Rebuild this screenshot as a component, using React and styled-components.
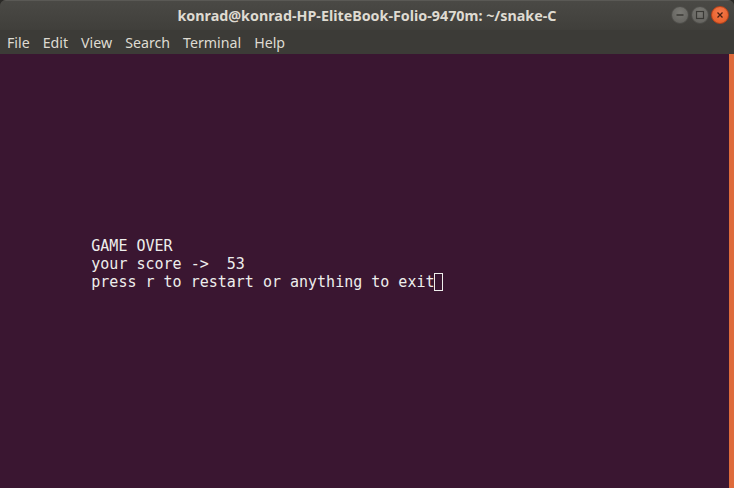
import styled, { createGlobalStyle } from "styled-components";

const GlobalStyle = createGlobalStyle`
  html, body {
    margin: 0;
    padding: 0;
    background: #2b2a27;
  }
  #root {
    width: 734px;
    height: 488px;
  }
`;

const Window = styled.div`
  width: 734px;
  height: 488px;
  display: flex;
  flex-direction: column;
  border-radius: 6px 6px 0 0;
  overflow: hidden;
  background: #3c3b37;
`;

const TitleBar = styled.div`
  height: 30px;
  position: relative;
  display: flex;
  align-items: center;
  justify-content: center;
  background: linear-gradient(#4a4945, #403f3b);
  border-top: 1px solid #5a5955;
  box-sizing: border-box;
`;

const Title = styled.div`
  font-family: "Noto Sans", "DejaVu Sans", sans-serif;
  font-weight: bold;
  font-size: 14.3px;
  color: #dfdbd2;
`;

const Controls = styled.div`
  position: absolute;
  right: 5px;
  top: 5px;
  display: flex;
  gap: 2px;
`;

const Circle = styled.div`
  width: 18px;
  height: 18px;
  border-radius: 50%;
  display: flex;
  align-items: center;
  justify-content: center;
  box-sizing: border-box;
  border: 1px solid ${(p) => (p.close ? "#b8431b" : "#4e4d49")};
  background: ${(p) =>
    p.close
      ? "radial-gradient(circle at 50% 35%, #f47a4d, #e35a22)"
      : "radial-gradient(circle at 50% 35%, #7a7974, #5f5e5a)"};
`;

const MenuBar = styled.div`
  height: 24px;
  display: flex;
  align-items: center;
  gap: 13px;
  padding-left: 7px;
  background: #3c3b37;
`;

const MenuItem = styled.span`
  font-family: "Noto Sans", "DejaVu Sans", sans-serif;
  font-size: 14.2px;
  color: #dfdbd2;
`;

const TerminalArea = styled.div`
  flex: 1;
  display: flex;
`;

const Screen = styled.div`
  flex: 1;
  background: #3a1631;
  padding-top: 3px;
  padding-left: 1px;
`;

const Line = styled.div`
  height: 18px;
  line-height: 18px;
  font-family: "DejaVu Sans Mono", "Liberation Mono", monospace;
  font-size: 15px;
  color: #eeeeec;
  white-space: pre;
  display: flex;
  align-items: center;
`;

const Cursor = styled.span`
  display: inline-block;
  width: 9px;
  height: 18px;
  box-sizing: border-box;
  border: 1px solid #eeeeec;
`;

const Scrollbar = styled.div`
  width: 5px;
  background: #de6b3b;
`;

const menus = ["File", "Edit", "View", "Search", "Terminal", "Help"];

const lines = [
  "", "", "", "", "", "", "", "", "", "",
  "          GAME OVER",
  "          your score ->  53",
];

export default function App() {
  return (
    <>
      <GlobalStyle />
      <Window>
        <TitleBar>
          <Title>konrad@konrad-HP-EliteBook-Folio-9470m: ~/snake-C</Title>
          <Controls>
            <Circle>
              <svg width="10" height="10" viewBox="0 0 10 10">
                <line x1="1.5" y1="5" x2="8.5" y2="5" stroke="#3a3935" strokeWidth="1.4" />
              </svg>
            </Circle>
            <Circle>
              <svg width="10" height="10" viewBox="0 0 10 10">
                <rect x="1.5" y="1.5" width="7" height="7" fill="none" stroke="#3a3935" strokeWidth="1.2" />
              </svg>
            </Circle>
            <Circle close>
              <svg width="10" height="10" viewBox="0 0 10 10">
                <path d="M2.5 2.5 L7.5 7.5 M7.5 2.5 L2.5 7.5" stroke="#4a2010" strokeWidth="1.3" />
              </svg>
            </Circle>
          </Controls>
        </TitleBar>
        <MenuBar>
          {menus.map((m) => (
            <MenuItem key={m}>{m}</MenuItem>
          ))}
        </MenuBar>
        <TerminalArea>
          <Screen>
            {lines.map((l, i) => (
              <Line key={i}>{l}</Line>
            ))}
            <Line>
              {"          press r to restart or anything to exit"}
              <Cursor />
            </Line>
          </Screen>
          <Scrollbar />
        </TerminalArea>
      </Window>
    </>
  );
}
